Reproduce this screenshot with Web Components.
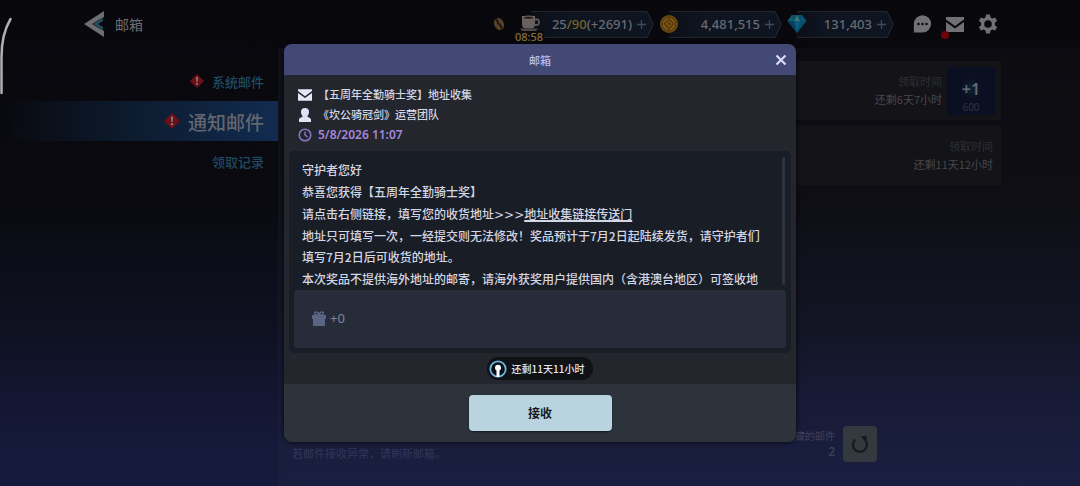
<!DOCTYPE html>
<html lang="zh-CN">
<head>
<meta charset="utf-8">
<meta name="viewport" content="width=device-width, initial-scale=1">
<title>邮箱</title>
<style>
  html, body { margin: 0; height: 100%; background: #08080d; }
  body { font-family: "Noto Sans", "Noto Sans CJK SC", sans-serif; font-size: 12px; color: #c9cbd6; }
</style>
</head>
<body>
<mail-app></mail-app>
<script>
const define = (name, html) => {
  const tpl = document.createElement('template');
  tpl.innerHTML = html;
  customElements.define(name, class extends HTMLElement {
    constructor() {
      super();
      this.attachShadow({ mode: 'open' }).append(tpl.content.cloneNode(true));
    }
  });
};

/* Small icon set, chosen by the "name" attribute */
const ICONS = {
  back: ['0 0 20 26', '<path d="M20 0v6L8 13l12 7v6L0 13z" fill="#6d6e72"/><path d="M19 7 9 13l10 6v-3l-5-3 5-3z" fill="#234e66"/>'],
  alert: ['0 0 18 18', '<path d="M9 1l8 8-8 8-8-8z" fill="#6b0f19"/><path d="M7.8 4.5h2.4l-.5 5.6H8.300z" fill="#857779"/><circle cx="9" cy="12.300" r="1.200" fill="#857779"/>'],
  bean: ['0 0 14 14', '<ellipse cx="7" cy="7" rx="4.800" ry="6.200" transform="rotate(-25 7 7)" fill="#574028"/><path d="M4 2.500c3 1 .5 3.500 3 4.500s1.500 3 3 4.500" fill="none" stroke="#15120f" stroke-width="1.800"/>'],
  cup: ['0 0 22 18', '<path d="M3 1h13v8.500c0 2.500-1.500 4-4 4H7c-2.500 0-4-1.500-4-4z" fill="#67605f"/><ellipse cx="9.500" cy="2.500" rx="6.500" ry="2" fill="#7a706c"/><ellipse cx="9.500" cy="2.700" rx="5" ry="1.200" fill="#2c211d"/><path d="M16 4.500h2.200c2.600 0 2.600 5.500-.5 5.500H15.500" fill="none" stroke="#5e5756" stroke-width="1.800"/><path d="M1 13.500h18l-2.500 3H3.500z" fill="#4b4645"/>'],
  coin: ['0 0 20 20', '<circle cx="10" cy="10" r="9" fill="#6c4912"/><circle cx="10" cy="10" r="7" fill="#7c5616" stroke="#4e340d"/><path d="M10 5l4.500 4.500L10 15l-4.500-5.500z" fill="none" stroke="#553a0e" stroke-width="1.500"/><circle cx="10" cy="9.500" r="1.500" fill="#553a0e"/>'],
  gem: ['0 0 20 20', '<path d="M5 1h10l4.500 6L10 19 .5 7z" fill="#0a4f6b"/><path d="M5 1l2 6H.5z" fill="#125a70"/><path d="M15 1l-2 6h6.500z" fill="#0b5270"/><path d="M10 1l3 6H7z" fill="#3d776f"/><path d="M7 7h6l-3 12z" fill="#0b5d80"/><path d="M.5 7H7l3 12z" fill="#083f60"/>'],
  chat: ['0 0 19 18', '<path d="M9.500.2A8.600 8.600 0 0 1 9.500 17.400H.9V8.800A8.600 8.600 0 0 1 9.500.2z" fill="#717174"/><g fill="#0e0e13"><circle cx="5.500" cy="9" r="1.300"/><circle cx="9.500" cy="9" r="1.300"/><circle cx="13.500" cy="9" r="1.300"/></g>'],
  mail: ['0 0 18 15', '<path d="M0 0h18v2.500L9 9 0 2.500z" fill="currentColor"/><path d="M0 5l9 6.500L18 5v10H0z" fill="currentColor"/>'],
  gear: ['0 0 20 20', '<path fill-rule="evenodd" d="M8 .5h4l.6 2.900 1.700 1 2.800-1 2 3.400-2.200 2v2.400l2.200 2-2 3.400-2.800-1-1.700 1-.6 2.900H8l-.6-2.900-1.700-1-2.800 1-2-3.400 2.200-2V8.800l-2.200-2 2-3.400 2.800 1 1.700-1zM10 6.200a3.800 3.800 0 1 0 0 7.600 3.800 3.800 0 0 0 0-7.600z" fill="#717174"/>'],
  close: ['0 0 12 12', '<path d="M1.500 1.500l9 9M10.500 1.500l-9 9" stroke="#d9dcf7" stroke-width="2.200"/>'],
  person: ['0 0 12 14', '<path d="M6 0a4 4 0 0 1 4 4c0 2-.8 3.300-1.800 4.200.2 1 3.300 1 3.800 3.300V14H0v-2.500C.5 9.200 3.600 9.200 3.800 8.200 2.800 7.300 2 6 2 4a4 4 0 0 1 4-4z" fill="#dfe2f5"/>'],
  clock: ['0 0 14 14', '<circle cx="7" cy="7" r="5.800" fill="none" stroke="#8e76c4" stroke-width="1.500"/><path d="M7 3.500V7l2.500 2" fill="none" stroke="#8e76c4" stroke-width="1.400"/>'],
  gift: ['0 0 14 15', '<path d="M0 4h14v4h-1v7H1V8H0z" fill="#5c6484"/><path d="M7 4C5 4 2.500 3.800 2.500 2.300 2.500.6 5.800.3 7 3.500 8.200.3 11.500.6 11.500 2.300 11.500 3.800 9 4 7 4z" fill="none" stroke="#5c6484" stroke-width="1.400"/>'],
  timer: ['0 0 18 18', '<circle cx="9" cy="9" r="7.700" fill="#0b0e12" stroke="#6fb7de" stroke-width="1.800"/><circle cx="9" cy="7.800" r="3" fill="#fff"/><path d="M7.500 9h3v8h-3z" fill="#fff"/>'],
  refresh: ['0 0 18 18', '<path d="M4.200 4.600A7 7 0 1 0 14.800 6" fill="none" stroke="#16191f" stroke-width="2.200"/><path d="M9.500 1.200L16 .8l-1 6.400z" fill="#16191f"/>']
};
customElements.define('ui-icon', class extends HTMLElement {
  constructor() { super(); this.attachShadow({ mode: 'open' }); }
  connectedCallback() {
    const [box, art] = ICONS[this.getAttribute('name')];
    this.shadowRoot.innerHTML = `<style>:host{display:block;flex:none}svg{display:block;width:100%;height:100%}</style>
      <svg viewBox="${box}" aria-hidden="true">${art}</svg>`;
  }
});

/* Resource counter in the top bar */
define('currency-bar', `
  <style>
    :host { display: flex; align-items: center; }
    .icon { position: relative; z-index: 1; flex: none; margin-right: -10px; }
    .body { flex: 1; display: flex; align-items: center; justify-content: flex-end; gap: 4px; box-sizing: border-box;
      height: 27px; padding-left: 16px; border: solid #20252f; border-width: 1px 0;
      background: linear-gradient(90deg, #0b0e15, #0e1521 30%); font-size: 13px; line-height: 16px; font-weight: 500; color: #686a71; white-space: nowrap; }
    button { all: unset; width: 10px; height: 20px; display: grid; place-items: center; }
    button svg { width: 9px; height: 9px; }
    .cap { width: 8px; height: 27px; flex: none; }
  </style>
  <div class="icon"><slot name="icon"></slot></div>
  <div class="body"><slot></slot>
    <button aria-label="增加"><svg viewBox="0 0 9 9"><path d="M4.500 0v9M0 4.500h9" stroke="#434954" stroke-width="1.300"/></svg></button>
  </div>
  <svg class="cap" viewBox="0 0 8 27"><path d="M0 0h1l7 13.500L1 27H0z" fill="#0e1521"/><path d="M0 .5h1l6.300 13L1 26.500H0" fill="none" stroke="#262b35"/></svg>
`);

define('top-bar', `
  <style>
    :host { display: flex; align-items: center; height: 48px; box-sizing: border-box; padding: 0 82px 0 84px; }
    a { display: flex; align-items: center; gap: 11px; color: #6d6e72; font-size: 14px; line-height: 20px;
      font-family: "Noto Sans CJK SC", sans-serif; text-decoration: none; margin-right: auto; }
    .hud { display: flex; align-items: center; gap: 5px; }
    .energy { width: 135px; } .gold { width: 123px; } .gems { width: 107px; }
    .cup { position: relative; }
    .cup time { position: absolute; left: -5px; top: 16px; padding: 0 1px; background: #0a0a0e; color: #85713a;
      font-size: 11px; font-weight: 500; line-height: 12px; }
    b { font-weight: 500; color: #786427; }
    nav { display: flex; align-items: center; gap: 14px; margin-left: 19px; }
    nav button { all: unset; position: relative; color: #717174; }
    .dot { position: absolute; left: -5px; bottom: -7px; width: 8px; height: 8px; border-radius: 50%; background: #6e0308; }
  </style>
  <a href="#back"><ui-icon name="back" style="width:20px;height:26px"></ui-icon>邮箱</a>
  <div class="hud">
    <ui-icon name="bean" style="width:14px;height:14px;margin-right:8px"></ui-icon>
    <currency-bar class="energy">
      <div slot="icon" class="cup"><ui-icon name="cup" style="width:22px;height:18px"></ui-icon><time>08:58</time></div>
      <span>25<b>/90</b>(+2691)</span>
    </currency-bar>
    <currency-bar class="gold"><ui-icon slot="icon" name="coin" style="width:20px;height:20px"></ui-icon><span>4,481,515</span></currency-bar>
    <currency-bar class="gems"><ui-icon slot="icon" name="gem" style="width:20px;height:20px"></ui-icon><span>131,403</span></currency-bar>
  </div>
  <nav>
    <button aria-label="聊天"><ui-icon name="chat" style="width:19px;height:18px"></ui-icon></button>
    <button aria-label="邮件"><ui-icon name="mail" style="width:18px;height:15px"></ui-icon><span class="dot"></span></button>
    <button aria-label="设置"><ui-icon name="gear" style="width:20px;height:20px"></ui-icon></button>
  </nav>
`);

define('side-tab', `
  <style>
    :host { display: block; }
    a { display: flex; align-items: center; justify-content: flex-end; gap: 7px; height: 40px; padding-right: 14px;
      color: #1f4b62; font-size: 13px; font-weight: 500; font-family: "Noto Sans CJK SC", sans-serif; text-decoration: none; }
    :host([active]) a { color: #62666e; font-size: 19px; background: linear-gradient(90deg, transparent, #0d1c30 50%, #112b50); }
  </style>
  <a href="#tab"><slot name="badge"></slot><slot></slot></a>
`);

define('mail-row', `
  <style>
    :host { display: flex; align-items: center; justify-content: flex-end; gap: 5px; height: 59px; box-sizing: border-box;
      padding: 0 8px; background: #131318; }
    :host([reward]) { padding-right: 6px; }
    .time { display: flex; flex-direction: column; align-items: flex-end; padding-bottom: 2px; line-height: 18px; font-size: 11px; color: #48484d;
      font-family: "Noto Sans CJK SC", sans-serif; }
    .time small { font-size: 11px; color: #2f2f34; }
  </style>
  <div class="time"><small>领取时间</small><slot></slot></div>
  <slot name="reward"></slot>
`);

define('reward-tile', `
  <style>
    :host { display: flex; flex-direction: column; align-items: center; justify-content: flex-end; width: 48px; height: 48px;
      background: radial-gradient(circle at 50% 45%, #0d2230, #0b0f22 30%); }
    b { font-size: 16px; line-height: 20px; font-weight: 600; color: #656974; }
    span { font-size: 10px; line-height: 16px; color: #30323a; }
  </style>
  <b>+1</b><span><slot></slot></span>
`);

define('mail-footer', `
  <style>
    :host { display: flex; align-items: center; height: 36px; padding: 0 203px 24px 14px; font-size: 11px; color: #33365a; }
    p { margin: 18px auto 0 0; }
    .count { display: flex; flex-direction: column; align-items: flex-end; font-size: 10px; line-height: 15px; color: #3f425a; margin-right: 8px; }
    .count b { font-size: 12px; font-weight: 500; }
    button { border: 0; padding: 0; width: 34px; height: 36px; border-radius: 4px; display: grid; place-items: center; background: #34383f; }
  </style>
  <p>若邮件接收异常，请刷新邮箱。</p>
  <div class="count"><span>收藏的邮件</span><b>2</b></div>
  <button aria-label="刷新"><ui-icon name="refresh" style="width:18px;height:18px"></ui-icon></button>
`);

define('mail-dialog', `
  <style>
    :host { display: block; width: min(512px, calc(100% - 32px)); border-radius: 8px; overflow: hidden; background: #23272d;
      box-shadow: 0 0 5px #05060b; }
    header { display: grid; grid-template-columns: 31px 1fr 31px; align-items: center; height: 31px; background: #434975; }
    h1 { grid-column: 2; margin: 0; text-align: center; font: 500 11px/20px "Noto Sans CJK SC", sans-serif; color: #b8bdf0; }
    header button { all: unset; display: grid; place-items: center; height: 31px; }
    .meta { margin: 0; padding: 10px 14px 6px; list-style: none; font-size: 11px;
      line-height: 20px; font-weight: 500; color: #d3d6e6; }
    .meta li { display: flex; align-items: center; height: 20px; }
    .meta i { width: 20px; color: #e4e7f8; }
    .meta time { color: #a386dc; font-size: 12px; font-weight: 600; }
    .card { margin: 0 5px; padding: 5px; border-radius: 5px; background: #191d25; }
    .scroll { display: flex; height: 134px; overflow: hidden; }
    .text { flex: 1; padding: 3px 16px 0 8px; font-size: 12px; line-height: 21px; font-weight: 500; color: #d3d6e4; font-family: "Noto Sans CJK SC", sans-serif; }
    .text p { margin: 0 0 1px; }
    .text a { color: inherit; text-decoration: underline; text-decoration-thickness: 2px; text-underline-offset: 1px; }
    .arrows { font: 12px/1px "DejaVu Sans", sans-serif; }
    .bar { width: 3px; height: 128px; margin: 1px 1px 0 0; border-radius: 2px; background: #2f333d; }
    .gift { display: flex; align-items: center; gap: 4px; height: 56px; padding: 0 0 2px 18px; border-radius: 3px;
      background: #262c39; color: #80859c; font-size: 13px; line-height: 18px; }
    .left { display: flex; justify-content: center; padding: 4px 0; }
    .left span { display: flex; align-items: center; gap: 5px; height: 23px; padding: 0 9px 0 2px; border-radius: 12px;
      background: #101216; color: #e6e8ee; font: 500 10px/20px "Noto Sans CJK SC", sans-serif; }
    footer { display: flex; justify-content: center; padding: 11px 0; background: #2d333b; }
    footer button { border: 0; width: 143px; height: 36px; border-radius: 4px; background: #b9d3df; color: #14181f;
      font: 600 12px/20px "Noto Sans CJK SC", sans-serif; box-shadow: 0 1px 2px #15191f; }
  </style>
  <header><h1>邮箱</h1><button aria-label="关闭"><ui-icon name="close" style="width:12px;height:12px"></ui-icon></button></header>
  <ul class="meta">
    <li><i><ui-icon name="mail" style="width:14px;height:12px"></ui-icon></i><span>【五周年全勤骑士奖】地址收集</span></li>
    <li><i><ui-icon name="person" style="width:12px;height:14px;margin-left:1px"></ui-icon></i><span>《坎公骑冠剑》运营团队</span></li>
    <li><i><ui-icon name="clock" style="width:14px;height:14px"></ui-icon></i><time>5/8/2026 11:07</time></li>
  </ul>
  <div class="card">
    <div class="scroll">
      <div class="text">
        <p>守护者您好</p>
        <p>恭喜您获得【五周年全勤骑士奖】</p>
        <p>请点击右侧链接，填写您的收货地址<span class="arrows">&gt;&gt;&gt;</span><a href="#form">地址收集链接传送门</a></p>
        <p>地址只可填写一次，一经提交则无法修改！奖品预计于7月2日起陆续发货，请守护者们填写7月2日后可收货的地址。</p>
        <p>本次奖品不提供海外地址的邮寄，请海外获奖用户提供国内（含港澳台地区）可签收地</p>
      </div>
      <div class="bar"></div>
    </div>
    <div class="gift"><ui-icon name="gift" style="width:14px;height:15px"></ui-icon>+0</div>
  </div>
  <div class="left"><span><ui-icon name="timer" style="width:18px;height:18px"></ui-icon>还剩11天11小时</span></div>
  <footer><button>接收</button></footer>
`);

define('mail-app', `
  <style>
    :host { position: relative; display: flex; flex-direction: column; min-height: 100%; box-sizing: border-box;
      background: linear-gradient(#07070c, #0a0a10 42%, #0f1122 68%, #151939 90%, #161a3e); }
    main { flex: 1; display: grid; grid-template-columns: 278px 1fr; }
    aside { padding-top: 13px; }
    .list { display: flex; flex-direction: column; background: linear-gradient(90deg, #1c1e3440, transparent 20px), #ffffff05; }
    .rows { display: flex; flex-direction: column; gap: 6px; padding: 13px 79px 0 12px; margin-bottom: auto; }
    .edge { position: absolute; left: 0; top: 17px; width: 12px; height: 78px; }
    .overlay { position: absolute; inset: 0; display: grid; place-items: center; z-index: 2; }
    .overlay mail-dialog { justify-self: center; }
  </style>
  <top-bar></top-bar>
  <main>
    <aside>
      <side-tab><ui-icon slot="badge" name="alert" style="width:16px;height:16px"></ui-icon>系统邮件</side-tab>
      <side-tab active><ui-icon slot="badge" name="alert" style="width:18px;height:18px"></ui-icon>通知邮件</side-tab>
      <side-tab>领取记录</side-tab>
    </aside>
    <section class="list">
      <div class="rows">
        <mail-row reward>还剩6天7小时<reward-tile slot="reward">600</reward-tile></mail-row>
        <mail-row>还剩11天12小时</mail-row>
      </div>
      <mail-footer></mail-footer>
    </section>
  </main>
  <svg class="edge" viewBox="0 0 12 78" aria-hidden="true"><path d="M10.500 2C4 13 1.500 24 1.500 40v36" fill="none" stroke="#b0b0b2" stroke-width="2.500" stroke-linecap="round"/></svg>
  <div class="overlay"><mail-dialog></mail-dialog></div>
`);
</script>
</body>
</html>
